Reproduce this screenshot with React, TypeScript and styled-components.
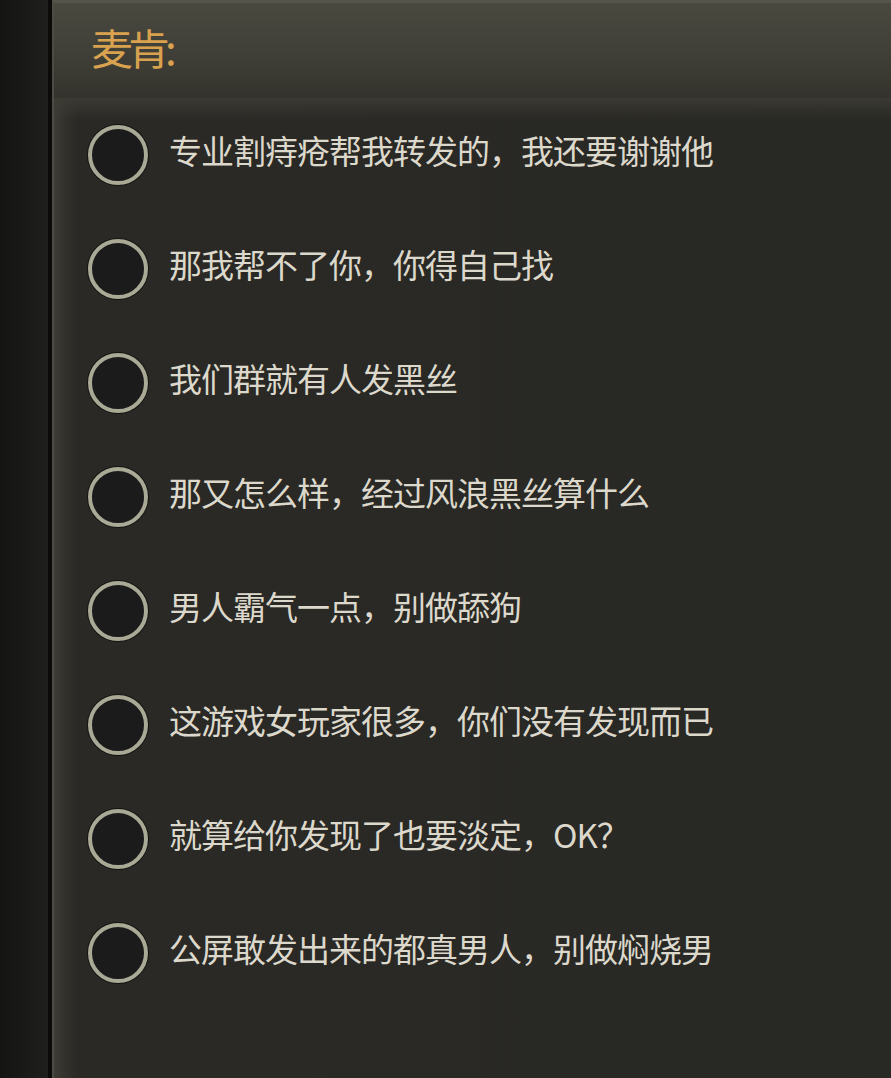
import React from 'react'
import styled, { createGlobalStyle } from 'styled-components'

const GlobalStyle = createGlobalStyle`
    html, body {
        margin: 0;
        padding: 0;
        background: #1a1a18;
    }
    body {
        font-family: "Noto Sans CJK SC", "Noto Sans", sans-serif;
    }
`

const Page = styled.div`
    width: 891px;
    height: 1078px;
    display: flex;
    overflow: hidden;
    background: #1a1a18;
`

const LeftRail = styled.div`
    width: 48px;
    flex-shrink: 0;
    background: linear-gradient(to right, #141413 0%, #1f1f1d 100%);
    border-right: 4px solid #0b0b0a;
`

const Panel = styled.div`
    flex: 1;
    display: flex;
    flex-direction: column;
    border-top: 3px solid #55554c;
    border-left: 2px solid #4c4c45;
    background: #2b2a26;
`

const Header = styled.div`
    height: 95px;
    flex-shrink: 0;
    display: flex;
    align-items: center;
    padding-left: 37px;
    background: linear-gradient(to bottom, #4a4940 0%, #403f37 55%, #33322c 100%);
`

const Title = styled.div`
    color: #d9a24f;
    font-size: 42px;
    letter-spacing: -5px;
    line-height: 1;
    margin-top: -8px;
`

const List = styled.div`
    flex: 1;
    display: flex;
    flex-direction: column;
    padding-left: 34px;
    background:
        linear-gradient(to bottom, rgba(60, 59, 52, 0.9) 0px, rgba(43, 42, 38, 0) 22px),
        linear-gradient(to right, #3e3d37 0px, #33322d 10px, #2a2925 24px, #282824 100%);
`

const Row = styled.div`
    height: 114px;
    display: flex;
    align-items: center;
    gap: 21px;
`

const Radio = styled.div`
    width: 52px;
    height: 52px;
    border-radius: 50%;
    flex-shrink: 0;
    background: #1c1b1c;
    border: 4px solid #a9a996;
    box-shadow: 0 0 0 1px #141412;
`

const Label = styled.div`
    color: #dcd8cc;
    font-size: 33px;
    letter-spacing: -1px;
    line-height: 1;
    white-space: nowrap;
    margin-bottom: 10px;
`

const options = [
    '专业割痔疮帮我转发的，我还要谢谢他',
    '那我帮不了你，你得自己找',
    '我们群就有人发黑丝',
    '那又怎么样，经过风浪黑丝算什么',
    '男人霸气一点，别做舔狗',
    '这游戏女玩家很多，你们没有发现而已',
    '就算给你发现了也要淡定，OK？',
    '公屏敢发出来的都真男人，别做焖烧男',
]

function App() {
    return (
        <>
            <GlobalStyle />
            <Page>
                <LeftRail />
                <Panel>
                    <Header>
                        <Title>麦肯:</Title>
                    </Header>
                    <List>
                        {options.map((text) => (
                            <Row key={text}>
                                <Radio />
                                <Label>{text}</Label>
                            </Row>
                        ))}
                    </List>
                </Panel>
            </Page>
        </>
    )
}

export default App
